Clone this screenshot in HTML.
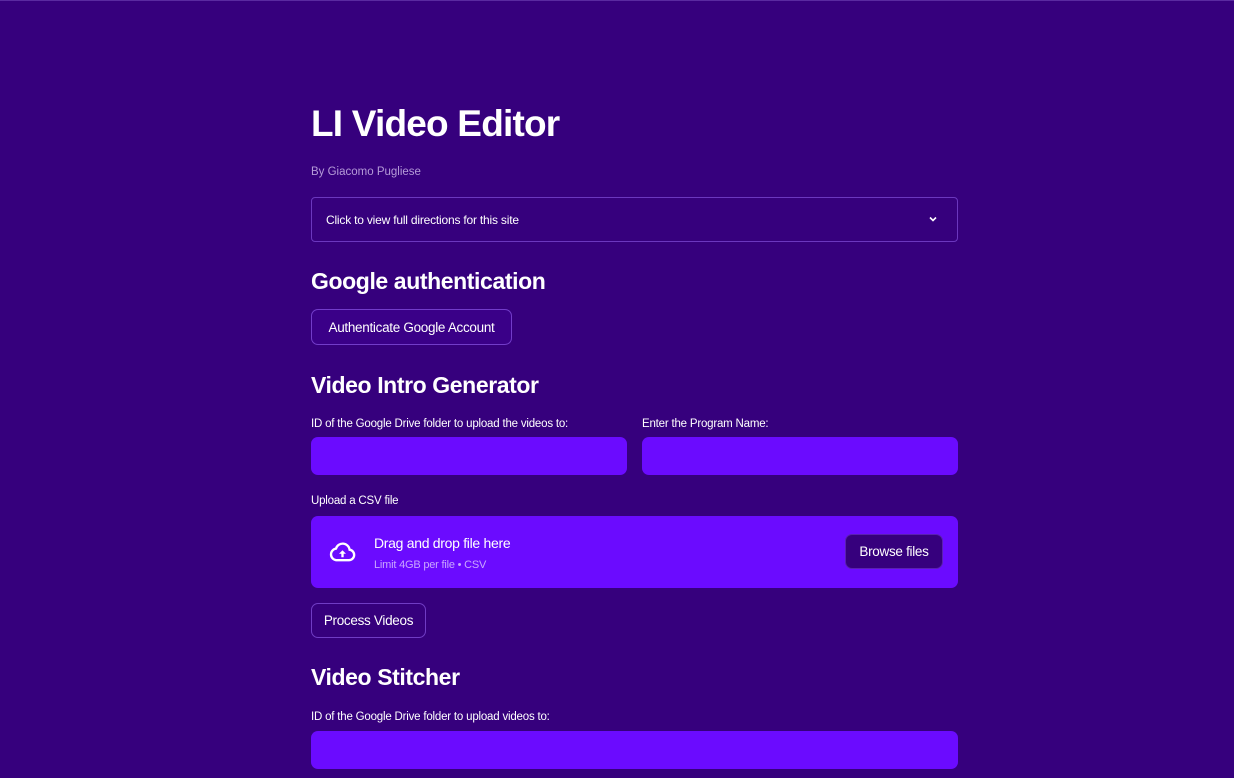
<!DOCTYPE html>
<html><head><style>
body{margin:0;width:1234px;height:778px;background:#36007d;font-family:"Liberation Sans",sans-serif;color:#fff;overflow:hidden;position:relative}
.a{position:absolute;white-space:nowrap}
h1{position:absolute;margin:0;left:311px;top:103px;font-size:37px;font-weight:bold;letter-spacing:-0.8px}
h2{position:absolute;margin:0;left:311px;font-size:23px;font-weight:bold;letter-spacing:-0.4px}
.lbl{font-size:11.5px;letter-spacing:-0.2px}
.btn{position:absolute;border:1px solid rgba(160,110,255,.55);border-radius:7px;font-size:13.5px;letter-spacing:-0.3px;display:flex;align-items:center;justify-content:center;box-sizing:border-box}
.inp{position:absolute;background:#6b0bff;border-radius:7px;height:38px}
</style></head><body>
<div style="position:absolute;left:0;top:0;width:1234px;height:1px;background:#5a2aa0"></div>
<h1>LI Video Editor</h1>
<div class="a" style="left:311px;top:166px;font-size:11.5px;color:#b59bd8">By Giacomo Pugliese</div>
<div style="position:absolute;left:311px;top:197px;width:647px;height:45px;box-sizing:border-box;border:1px solid rgba(160,110,255,.5);border-radius:4px"></div>
<div class="a lbl" style="left:326px;top:213px;font-size:12px">Click to view full directions for this site</div>
<svg class="a" style="left:927px;top:213px" width="12" height="12" viewBox="0 0 12 12"><path d="M3 4.5l3 3 3-3" stroke="#fff" stroke-width="1.6" fill="none"/></svg>
<h2 style="top:268px">Google authentication</h2>
<div class="btn" style="left:311px;top:309px;width:201px;height:36px;background:#3a0088">Authenticate Google Account</div>
<h2 style="top:372px">Video Intro Generator</h2>
<div class="a lbl" style="left:311px;top:418px">ID of the Google Drive folder to upload the videos to:</div>
<div class="a lbl" style="left:642px;top:418px">Enter the Program Name:</div>
<div class="inp" style="left:311px;top:437px;width:316px"></div>
<div class="inp" style="left:642px;top:437px;width:316px"></div>
<div class="a lbl" style="left:311px;top:495px">Upload a CSV file</div>
<div style="position:absolute;left:311px;top:516px;width:647px;height:72px;background:#6b0bff;border-radius:7px"></div>
<svg class="a" style="left:325px;top:538px" width="35" height="28" viewBox="0 0 24 24"><path d="M6.5 19h11a4.5 4.5 0 0 0 .6-8.96A6 6 0 0 0 6.4 9.1 5 5 0 0 0 6.5 19z" fill="none" stroke="#fff" stroke-width="2"/><path d="M12 10.5l-3 3h2v3h2v-3h2z" fill="#fff"/></svg>
<div class="a" style="left:374px;top:535px;font-size:14px;letter-spacing:-0.3px">Drag and drop file here</div>
<div class="a" style="left:374px;top:559px;font-size:11px;color:#c9a6ff;letter-spacing:-0.2px">Limit 4GB per file • CSV</div>
<div class="btn" style="left:845px;top:534px;width:98px;height:35px;background:#36007d;border-color:#5a20b0">Browse files</div>
<div class="btn" style="left:311px;top:603px;width:115px;height:35px">Process Videos</div>
<h2 style="top:664px">Video Stitcher</h2>
<div class="a lbl" style="left:311px;top:711px">ID of the Google Drive folder to upload videos to:</div>
<div class="inp" style="left:311px;top:731px;width:647px"></div>
</body></html>
